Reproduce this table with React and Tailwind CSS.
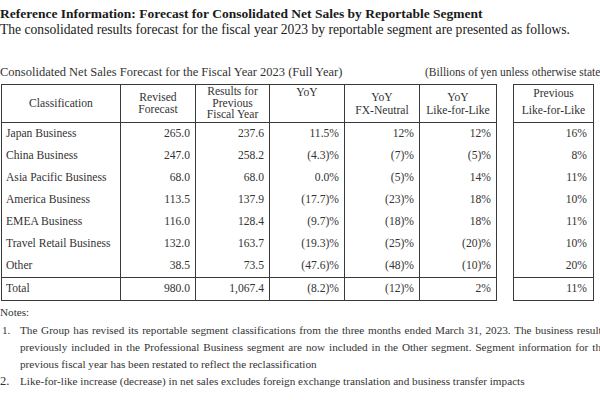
const rows = [
  ["Japan Business", "265.0", "237.6", "11.5%", "12%", "12%", "16%"],
  ["China Business", "247.0", "258.2", "(4.3)%", "(7)%", "(5)%", "8%"],
  ["Asia Pacific Business", "68.0", "68.0", "0.0%", "(5)%", "14%", "11%"],
  ["America Business", "113.5", "137.9", "(17.7)%", "(23)%", "18%", "10%"],
  ["EMEA Business", "116.0", "128.4", "(9.7)%", "(18)%", "18%", "11%"],
  ["Travel Retail Business", "132.0", "163.7", "(19.3)%", "(25)%", "(20)%", "10%"],
  ["Other", "38.5", "73.5", "(47.6)%", "(48)%", "(10)%", "20%"],
];

const total = ["Total", "980.0", "1,067.4", "(8.2)%", "(12)%", "2%", "11%"];

const cols = "grid grid-cols-[118px_75px_74px_75px_75px_77px]";

const Row = ({ cells, className = "" }) => (
  <div className={`${cols} ${className}`}>
    {cells.slice(0, 6).map((c, i) => (
      <div
        key={i}
        className={
          i === 0
            ? "pl-[4px] flex items-center whitespace-nowrap"
            : "border-l border-[#3a3a3a] pr-[5px] flex items-center justify-end whitespace-nowrap"
        }
      >
        {c}
      </div>
    ))}
  </div>
);

export default function App() {
  return (
    <div className="w-[600px] h-[400px] overflow-hidden bg-white text-[#1a1a1a] font-['Liberation_Serif',serif]">
      <div className="w-[640px] pt-[6px]">
        <h1 className="text-[13.5px] leading-[16px] font-bold whitespace-nowrap">
          Reference Information: Forecast for Consolidated Net Sales by Reportable Segment
        </h1>
        <p className="text-[13.6px] leading-[16px] whitespace-nowrap">
          The consolidated results forecast for the fiscal year 2023 by reportable segment are presented as follows.
        </p>

        <div className="mt-[27px] flex items-baseline text-[#333] leading-[14px]">
          <span className="w-[425px] whitespace-nowrap text-[12.5px]">
            Consolidated Net Sales Forecast for the Fiscal Year 2023 (Full Year)
          </span>
          <span className="whitespace-nowrap text-[11.5px]">(Billions of yen unless otherwise stated)</span>
        </div>

        <div className="mt-[5px] flex gap-[16px] text-[11.6px] text-[#333]">
          <div className="ml-px w-[496px] border border-[#3a3a3a]">
            <div className={`${cols} h-[38px] border-b border-[#3a3a3a] text-center`}>
              <div className="flex items-center justify-center leading-[12px]">Classification</div>
              <div className="border-l border-[#3a3a3a] flex items-center justify-center leading-[12px]">
                Revised
                <br />
                Forecast
              </div>
              <div className="border-l border-[#3a3a3a] flex items-center justify-center leading-[11.5px]">
                Results for
                <br />
                Previous
                <br />
                Fiscal Year
              </div>
              <div className="border-l border-[#3a3a3a] flex items-start justify-center leading-[14px] pt-px">YoY</div>
              <div className="border-l border-[#3a3a3a] flex items-center justify-center leading-[13px]">
                YoY
                <br />
                FX-Neutral
              </div>
              <div className="border-l border-[#3a3a3a] flex items-center justify-center leading-[13px]">
                YoY
                <br />
                Like-for-Like
              </div>
            </div>
            {rows.map((r) => (
              <Row key={r[0]} cells={r} className="h-[22px]" />
            ))}
            <Row cells={total} className="h-[23px] border-t border-[#3a3a3a]" />
          </div>

          <div className="w-[81px] border border-[#3a3a3a]">
            <div className="h-[38px] border-b border-[#3a3a3a] flex items-center justify-center text-center leading-[17px] pb-[3px]">
              Previous
              <br />
              Like-for-Like
            </div>
            {rows.map((r) => (
              <div key={r[0]} className="h-[22px] flex items-center justify-end pr-[6px]">
                {r[6]}
              </div>
            ))}
            <div className="h-[23px] border-t border-[#3a3a3a] flex items-center justify-end pr-[6px]">
              {total[6]}
            </div>
          </div>
        </div>

        <div className="text-[11.2px] leading-[17px] text-[#333] mt-[3px]">
          <p>Notes:</p>
          <div className="flex mt-px">
            <span className="w-[20px] pl-[2px] shrink-0">1.</span>
            <div className="w-[586px]">
              <p className="text-justify [text-align-last:justify] whitespace-nowrap">
                The Group has revised its reportable segment classifications from the three months ended March 31, 2023. The business results
              </p>
              <p className="text-justify [text-align-last:justify] whitespace-nowrap">
                previously included in the Professional Business segment are now included in the Other segment. Segment information for the
              </p>
              <p>previous fiscal year has been restated to reflect the reclassification</p>
            </div>
          </div>
          <div className="flex">
            <span className="w-[20px] shrink-0 text-[12.5px]">2.</span>
            <p>Like-for-like increase (decrease) in net sales excludes foreign exchange translation and business transfer impacts</p>
          </div>
        </div>
      </div>
    </div>
  );
}
